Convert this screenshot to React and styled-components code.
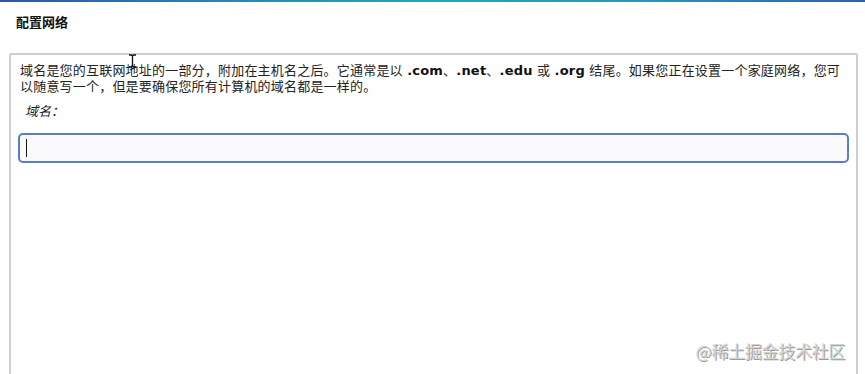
import React from "react";
import styled, { createGlobalStyle } from "styled-components";

const GlobalStyle = createGlobalStyle`
    html, body {
        margin: 0;
        padding: 0;
        background: #ffffff;
    }
    body {
        font-family: "DejaVu Sans", "Noto Sans CJK SC", sans-serif;
        color: #222;
        overflow: hidden;
    }
`;

const App = () => {
    return (
        <Page>
            <GlobalStyle />
            <TopBar />
            <Header>
                <Title>配置网络</Title>
            </Header>
            <Panel>
                <Description>
                    域名是您的互联网地址的一部分，附加在主机名之后。它通常是以{" "}
                    <Ext>.com</Ext>、<Ext>.net</Ext>、<Ext>.edu</Ext> 或{" "}
                    <Ext>.org</Ext> 结尾。如果您正在设置一个家庭网络，您可
                    <br />
                    以随意写一个，但是要确保您所有计算机的域名都是一样的。
                </Description>
                <FieldLabel>域名：</FieldLabel>
                <Field>
                    <Caret />
                </Field>
            </Panel>
            <Pointer width="9" height="14" viewBox="0 0 9 14">
                <path
                    d="M1 1h2.5l1 1 1-1H8M4.5 2v10M1 13h2.5l1-1 1 1H8"
                    fill="none"
                    stroke="#111"
                    strokeWidth="1.3"
                />
            </Pointer>
            <Watermark>@稀土掘金技术社区</Watermark>
        </Page>
    );
};

export default App;

const Page = styled.div`
    position: relative;
    width: 865px;
    height: 374px;
    overflow: hidden;
`;

const TopBar = styled.div`
    height: 2px;
    background: linear-gradient(
        90deg,
        #2b58a6 0%,
        #2386b8 25%,
        #1ea8bc 50%,
        #2396bf 75%,
        #2c62b0 100%
    );
`;

const Header = styled.div`
    height: 51px;
    padding-left: 16px;
    display: flex;
    align-items: flex-start;
`;

const Title = styled.h1`
    margin: 13px 0 0;
    font-size: 13px;
    line-height: 16px;
    font-weight: 700;
    color: #111;
`;

const Panel = styled.div`
    margin-left: 9px;
    width: 849px;
    height: 340px;
    border: 2px solid #cfcfcf;
    border-radius: 2px;
    padding: 8px 0 0 9px;
    box-sizing: border-box;
`;

const Description = styled.p`
    margin: 0;
    font-size: 13px;
    line-height: 16px;
    letter-spacing: 0.2px;
    color: #222;
    white-space: nowrap;
`;

const Ext = styled.b`
    font-weight: 700;
    color: #111;
`;

const FieldLabel = styled.div`
    margin: 9px 0 0 5px;
    font-size: 13px;
    line-height: 16px;
    font-style: italic;
    color: #222;
`;

const Field = styled.div`
    margin: 13px 0 0 -2px;
    width: 831px;
    height: 30px;
    box-sizing: border-box;
    border: 2px solid #5a7ec3;
    border-radius: 5px;
    background: #fafafd;
    display: flex;
    align-items: center;
    padding-left: 6px;
`;

const Caret = styled.span`
    width: 1px;
    height: 18px;
    background: #111;
`;

const Pointer = styled.svg`
    position: absolute;
    left: 128px;
    top: 54px;
`;

const Watermark = styled.div`
    position: absolute;
    right: 20px;
    bottom: 11px;
    font-family: "Noto Sans CJK SC", sans-serif;
    font-size: 17px;
    color: #d4d4d4;
    text-shadow: 1px 1px 0 #9a9a9a;
    letter-spacing: -0.3px;
`;
